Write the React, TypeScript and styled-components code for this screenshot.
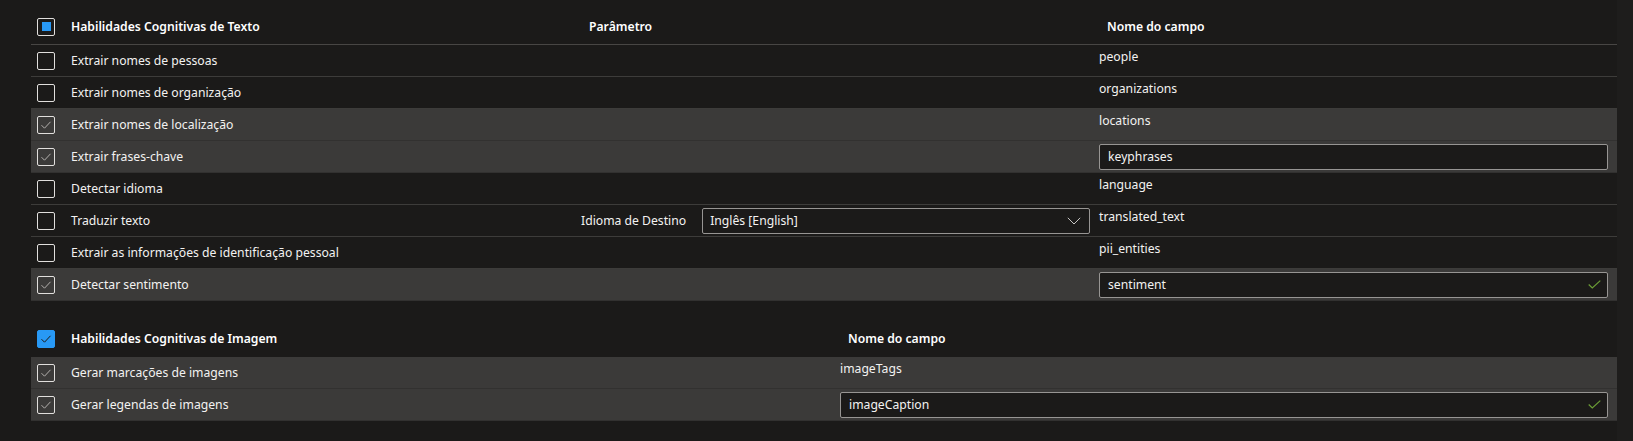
import React from "react";
import styled, { createGlobalStyle } from "styled-components";

const GlobalStyle = createGlobalStyle`
  html, body { margin: 0; padding: 0; background: #1e1d1c; }
  body { font-family: "Noto Sans", "Open Sans", sans-serif; font-size: 12.2px; color: #f3f2f1; }
  * { box-sizing: border-box; }
`;

const Page = styled.div`
  width: 1617px;
  min-height: 441px;
  background: #1b1a19;
  padding: 9px 0 0 31px;
  display: flex;
  flex-direction: column;
  gap: 20px;
`;

const Table = styled.div`
  display: flex;
  flex-direction: column;
`;

const HeaderRow = styled.div<{ $cols: string; $line?: boolean }>`
  display: grid;
  grid-template-columns: ${(p) => p.$cols};
  height: 36px;
  align-items: center;
  border-bottom: 1px solid ${(p) => (p.$line ? "#484644" : "transparent")};
`;

const Row = styled.div<{ $cols: string; $selected?: boolean }>`
  display: grid;
  grid-template-columns: ${(p) => p.$cols};
  height: 32px;
  background: ${(p) => (p.$selected ? "#3b3a39" : "transparent")};
  border-bottom: 1px solid ${(p) => (p.$selected ? "#323130" : "#3d3c3a")};
`;

const NameCell = styled.div`
  display: flex;
  align-items: center;
  gap: 16px;
  padding-left: 6px;
  min-width: 0;
`;

const HeaderTitle = styled.span`
  font-weight: 600;
  color: #ffffff;
  white-space: nowrap;
`;

const HeaderLabel = styled.span`
  font-weight: 600;
  color: #ffffff;
  padding-left: 8px;
  white-space: nowrap;
`;

const Label = styled.span`
  color: #f3f2f1;
  white-space: nowrap;
`;

const ParamCell = styled.div`
  display: flex;
  align-items: center;
  gap: 16px;
  padding-right: 9px;
`;

const FieldText = styled.div`
  padding-top: 2px;
  line-height: 20px;
  color: #f3f2f1;
`;

const FieldCell = styled.div`
  display: flex;
  align-items: center;
  padding-right: 9px;
`;

const Box = styled.div<{ $variant: "empty" | "checked" | "mixed" | "filled" }>`
  width: 18px;
  height: 18px;
  flex: 0 0 18px;
  border-radius: 2px;
  border: 1px solid ${(p) => (p.$variant === "filled" ? "#2899f5" : "#e1dfdd")};
  background: ${(p) => (p.$variant === "filled" ? "#2899f5" : "transparent")};
  display: flex;
  align-items: center;
  justify-content: center;
`;

const MixedDot = styled.div`
  width: 9px;
  height: 9px;
  background: #2899f5;
`;

const InputBox = styled.div`
  flex: 1;
  height: 26px;
  border: 1px solid #979593;
  border-radius: 2px;
  background: #1b1a19;
  display: flex;
  align-items: center;
  justify-content: space-between;
  padding: 0 6px 0 8px;
  color: #f3f2f1;
`;

const SelectBox = styled(InputBox)`
  padding: 0 8px 0 7px;
`;

type BoxVariant = "empty" | "checked" | "mixed" | "filled";

function Checkbox({ variant }: { variant: BoxVariant }) {
  return (
    <Box $variant={variant}>
      {variant === "mixed" && <MixedDot />}
      {(variant === "checked" || variant === "filled") && (
        <svg width="12" height="10" viewBox="0 0 12 10">
          <path
            d="M1.5 5.2 L4.5 8.2 L10.5 1.8"
            fill="none"
            stroke={variant === "filled" ? "#1b1a19" : "#b3b0ad"}
            strokeWidth="1"
          />
        </svg>
      )}
    </Box>
  );
}

const GreenCheck = () => (
  <svg width="13" height="9" viewBox="0 0 13 9">
    <path d="M0.7 4.5 L4.3 8 L12.3 0.6" fill="none" stroke="#6b9d35" strokeWidth="1.2" />
  </svg>
);

const Chevron = () => (
  <svg width="14" height="8" viewBox="0 0 14 8">
    <path d="M0.8 0.8 L7 7 L13.2 0.8" fill="none" stroke="#c8c6c4" strokeWidth="1" />
  </svg>
);

type TextRow = {
  label: string;
  field: string;
  checked: boolean;
  input?: boolean;
  valid?: boolean;
  param?: boolean;
};

const textRows: TextRow[] = [
  { label: "Extrair nomes de pessoas", field: "people", checked: false },
  { label: "Extrair nomes de organização", field: "organizations", checked: false },
  { label: "Extrair nomes de localização", field: "locations", checked: true },
  { label: "Extrair frases-chave", field: "keyphrases", checked: true, input: true },
  { label: "Detectar idioma", field: "language", checked: false },
  { label: "Traduzir texto", field: "translated_text", checked: false, param: true },
  { label: "Extrair as informações de identificação pessoal", field: "pii_entities", checked: false },
  { label: "Detectar sentimento", field: "sentiment", checked: true, input: true, valid: true },
];

const imageRows: TextRow[] = [
  { label: "Gerar marcações de imagens", field: "imageTags", checked: true },
  { label: "Gerar legendas de imagens", field: "imageCaption", checked: true, input: true, valid: true },
];

const TEXT_COLS = "550px 518px 1fr";
const IMAGE_COLS = "809px 1fr";

function Field({ row }: { row: TextRow }) {
  if (row.input) {
    return (
      <FieldCell>
        <InputBox>
          <span>{row.field}</span>
          {row.valid && <GreenCheck />}
        </InputBox>
      </FieldCell>
    );
  }
  return <FieldText>{row.field}</FieldText>;
}

export default function App() {
  return (
    <>
      <GlobalStyle />
      <Page>
        <Table>
          <HeaderRow $cols={TEXT_COLS} $line>
            <NameCell>
              <Checkbox variant="mixed" />
              <HeaderTitle>Habilidades Cognitivas de Texto</HeaderTitle>
            </NameCell>
            <HeaderLabel>Parâmetro</HeaderLabel>
            <HeaderLabel>Nome do campo</HeaderLabel>
          </HeaderRow>
          {textRows.map((r) => (
            <Row key={r.field} $cols={TEXT_COLS} $selected={r.checked}>
              <NameCell>
                <Checkbox variant={r.checked ? "checked" : "empty"} />
                <Label>{r.label}</Label>
              </NameCell>
              <ParamCell>
                {r.param && (
                  <>
                    <Label>Idioma de Destino</Label>
                    <SelectBox>
                      <span>Inglês [English]</span>
                      <Chevron />
                    </SelectBox>
                  </>
                )}
              </ParamCell>
              <Field row={r} />
            </Row>
          ))}
        </Table>
        <Table>
          <HeaderRow $cols={IMAGE_COLS}>
            <NameCell>
              <Checkbox variant="filled" />
              <HeaderTitle>Habilidades Cognitivas de Imagem</HeaderTitle>
            </NameCell>
            <HeaderLabel>Nome do campo</HeaderLabel>
          </HeaderRow>
          {imageRows.map((r) => (
            <Row key={r.field} $cols={IMAGE_COLS} $selected={r.checked}>
              <NameCell>
                <Checkbox variant="checked" />
                <Label>{r.label}</Label>
              </NameCell>
              <Field row={r} />
            </Row>
          ))}
        </Table>
      </Page>
    </>
  );
}
